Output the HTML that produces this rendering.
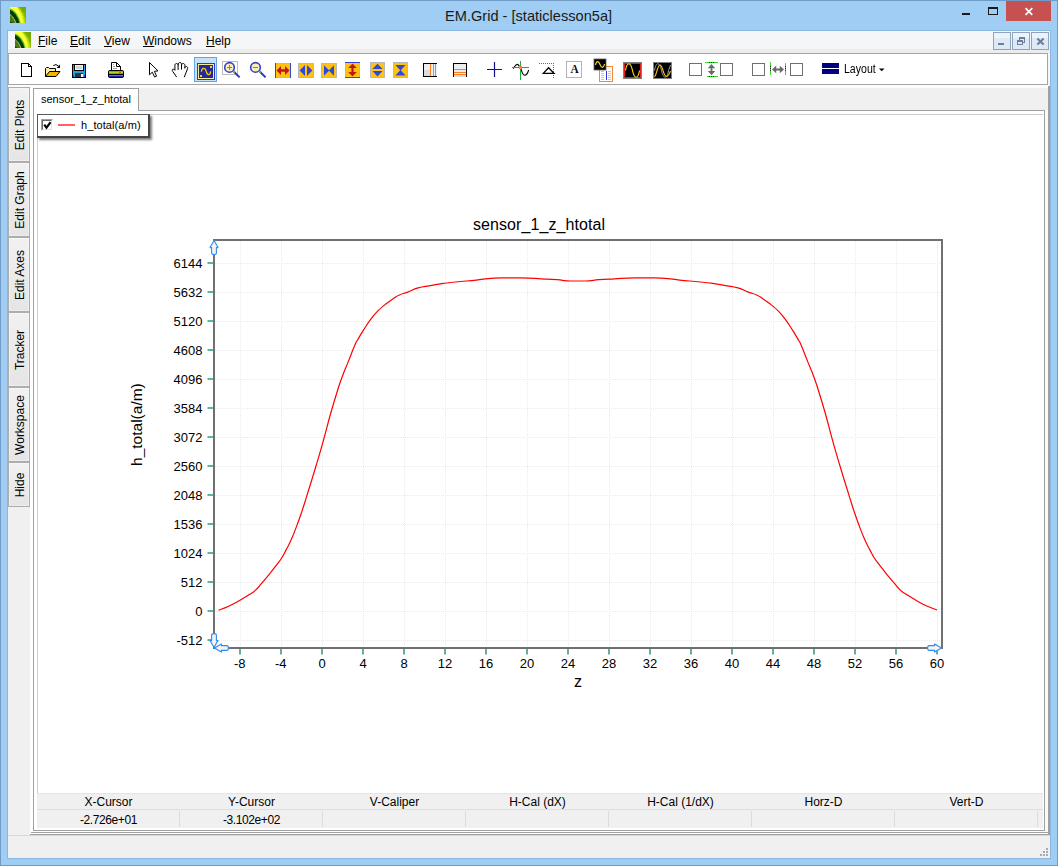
<!DOCTYPE html>
<html lang="en"><head><meta charset="utf-8"><title>EM.Grid - [staticlesson5a]</title>
<style>
html,body{margin:0;padding:0}
body{width:1058px;height:866px;position:relative;overflow:hidden;background:#9fcdf4;
 font-family:"Liberation Sans",sans-serif;color:#000}
.a{position:absolute}
.t{position:absolute;white-space:nowrap;line-height:1}
svg{position:absolute;overflow:visible}
.sb{position:absolute;left:8px;width:22px;box-sizing:border-box;background:linear-gradient(#f1f1f1,#e5e5e5);
 border:1px solid #adadad;box-shadow:inset 0 0 0 1px rgba(255,255,255,.35)}
.sb span{position:absolute;left:calc(50% + .8px);top:50%;white-space:nowrap;font-size:12px;line-height:1;
 transform:translate(-50%,-50%) rotate(-90deg)}
.cb{position:absolute;width:13px;height:13px;box-sizing:border-box;border:1px solid #707070;background:#fff;top:63px}
.hd{position:absolute;top:794px;height:16px;width:143px;text-align:center;font-size:12px;line-height:16px}
.vl{position:absolute;top:812px;height:17px;width:143px;text-align:center;font-size:12px;line-height:17px;letter-spacing:-.4px}
.sep{position:absolute;top:811px;height:16px;width:1px;background:#dcdcdc}
</style></head>
<body>
<div class="a" style="left:0;top:0;width:1058px;height:866px;box-sizing:border-box;border:1px solid #6f9bc6"></div>
<svg style="left:10px;top:7px;overflow:hidden" width="16" height="16" viewBox="0 0 16 16">
<defs><linearGradient id="lg1" x1="0" y1="1" x2="1" y2="0"><stop offset="0" stop-color="#a8d808"/><stop offset=".6" stop-color="#84bc00"/><stop offset="1" stop-color="#6ea400"/></linearGradient>
<filter id="lb1" x="-.2" y="-.2" width="1.4" height="1.4"><feGaussianBlur stdDeviation=".45"/></filter></defs>
<rect width="16" height="16" fill="url(#lg1)"/>
<g filter="url(#lb1)">
<path d="M7.500 -1 Q14.300 5 15.800 17 L-1 17 L-1 -1 Z" fill="#c8f010"/>
<path d="M7 -1 Q13.600 5 15.200 17" fill="none" stroke="#90a018" stroke-width=".7" stroke-dasharray="1.200 1"/>
<path d="M5.500 -1 Q11.800 5 13.600 17 L-1 17 L-1 -1 Z" fill="#ffff3a"/>
<path d="M-1 1 Q8 3.500 10.900 17 L-1 17 Z" fill="#4cc024"/>
<path d="M-1 2.600 Q7 5 9.600 17 L-1 17 Z" fill="#043a04"/>
<path d="M-1 6.800 Q4.500 9.500 6.700 17 L-1 17 Z" fill="#4a7a10"/>
</g>
<path d="M0 7.400 Q3.600 9.800 6 16.400" fill="none" stroke="#f4f4f4" stroke-width="1" stroke-dasharray="1.100 .9"/>
<path d="M0 14.300 L2.800 16 L0 16 Z" fill="#2c2240"/>
</svg>
<div class="t" id="ttl" style="left:445px;top:6.6px;font-size:14.6px;line-height:18px;color:#1a1a1a">EM.Grid - [staticlesson5a]</div>
<div class="a" style="left:962px;top:13px;width:8px;height:2px;background:#1a1a1a"></div>
<div class="a" style="left:988px;top:7px;width:10px;height:8px;box-sizing:border-box;border:1px solid #1a1a1a;border-top-width:2px"></div>
<div class="a" style="left:1006px;top:1px;width:45px;height:20px;background:#c75050"></div>
<svg style="left:1024px;top:7px" width="10" height="9" viewBox="0 0 10 9"><path d="M1.500 1.100 L8.300 7.900 M8.300 1.100 L1.500 7.900" stroke="#fff" stroke-width="1.700"/></svg>
<div class="a" style="left:7px;top:30px;width:1044px;height:829px;background:#8cb8e0"></div>
<div class="a" style="left:8px;top:31px;width:1042px;height:827px;background:#f0f0f0"></div>
<div class="a" style="left:8px;top:31px;width:1042px;height:18px;background:#f5f6f7"></div>
<div class="a" style="left:8px;top:49px;width:1042px;height:4px;background:#ececed"></div>
<svg style="left:15px;top:32px;overflow:hidden" width="16" height="16" viewBox="0 0 16 16">
<defs><linearGradient id="lg2" x1="0" y1="1" x2="1" y2="0"><stop offset="0" stop-color="#a8d808"/><stop offset=".6" stop-color="#84bc00"/><stop offset="1" stop-color="#6ea400"/></linearGradient>
<filter id="lb2" x="-.2" y="-.2" width="1.4" height="1.4"><feGaussianBlur stdDeviation=".45"/></filter></defs>
<rect width="16" height="16" fill="url(#lg2)"/>
<g filter="url(#lb2)">
<path d="M7.500 -1 Q14.300 5 15.800 17 L-1 17 L-1 -1 Z" fill="#c8f010"/>
<path d="M7 -1 Q13.600 5 15.200 17" fill="none" stroke="#90a018" stroke-width=".7" stroke-dasharray="1.200 1"/>
<path d="M5.500 -1 Q11.800 5 13.600 17 L-1 17 L-1 -1 Z" fill="#ffff3a"/>
<path d="M-1 1 Q8 3.500 10.900 17 L-1 17 Z" fill="#4cc024"/>
<path d="M-1 2.600 Q7 5 9.600 17 L-1 17 Z" fill="#043a04"/>
<path d="M-1 6.800 Q4.500 9.500 6.700 17 L-1 17 Z" fill="#4a7a10"/>
</g>
<path d="M0 7.400 Q3.600 9.800 6 16.400" fill="none" stroke="#f4f4f4" stroke-width="1" stroke-dasharray="1.100 .9"/>
<path d="M0 14.300 L2.800 16 L0 16 Z" fill="#2c2240"/>
</svg>
<div class="t" id="m_File" style="left:38px;top:34px;font-size:12px;line-height:14px"><u>F</u>ile</div>
<div class="t" id="m_Edit" style="left:70px;top:34px;font-size:12px;line-height:14px"><u>E</u>dit</div>
<div class="t" id="m_View" style="left:104px;top:34px;font-size:12px;line-height:14px"><u>V</u>iew</div>
<div class="t" id="m_Windows" style="left:143px;top:34px;font-size:12px;line-height:14px"><u>W</u>indows</div>
<div class="t" id="m_Help" style="left:206px;top:34px;font-size:12px;line-height:14px"><u>H</u>elp</div>
<div class="a" style="left:993px;top:32px;width:18px;height:18px;box-sizing:border-box;border:1px solid #8fa3ba;background:linear-gradient(#ecf3fb 0,#ecf3fb 30%,#dde9f7 30%,#dde9f7 100%)"></div>
<div class="a" style="left:1012px;top:32px;width:18px;height:18px;box-sizing:border-box;border:1px solid #8fa3ba;background:linear-gradient(#ecf3fb 0,#ecf3fb 30%,#dde9f7 30%,#dde9f7 100%)"></div>
<div class="a" style="left:1031px;top:32px;width:18px;height:18px;box-sizing:border-box;border:1px solid #8fa3ba;background:linear-gradient(#ecf3fb 0,#ecf3fb 30%,#dde9f7 30%,#dde9f7 100%)"></div>
<div class="a" style="left:998px;top:43px;width:6px;height:2px;background:#6d7e96"></div>
<svg style="left:1012px;top:32px" width="18" height="18" viewBox="0 0 18 18" shape-rendering="crispEdges"><path d="M7.5 8 V5.5 H12.5 V10.5 H11" fill="none" stroke="#6d7e96"/><rect x="7" y="5" width="6" height="2" fill="#6d7e96"/><rect x="5.5" y="8.5" width="5" height="4" fill="none" stroke="#6d7e96"/><rect x="5" y="8" width="6" height="2" fill="#6d7e96"/></svg>
<svg style="left:1031px;top:32px" width="18" height="18" viewBox="0 0 18 18"><path d="M6.400 6.400 L12.600 12.600 M12.600 6.400 L6.400 12.600" stroke="#6d7e96" stroke-width="2.100"/></svg>
<div class="a" style="left:8px;top:53px;width:1040px;height:32px;box-sizing:border-box;border:1px solid #a4a4a4;border-left-color:#b0b0b0;background:#fff"></div>
<div class="a" style="left:8px;top:85px;width:1040px;height:3px;background:#fcfcfc"></div>
<div class="a" style="left:1048px;top:86px;width:2px;height:749px;background:#a0a0a0"></div>
<div class="a" style="left:1048px;top:53px;width:2px;height:33px;background:#f6f6f6"></div>
<!-- toolbar icons: one page-coordinate SVG -->
<svg style="left:0;top:0" width="1058" height="866" viewBox="0 0 1058 866">
<!-- new -->
<path d="M21.5 63.5 H28.5 L31.5 66.5 V76.5 H21.5 Z" fill="#fff" stroke="#000" shape-rendering="crispEdges"/>
<path d="M28.5 63.5 V66.5 H31.5" fill="none" stroke="#000" shape-rendering="crispEdges"/>
<!-- open -->
<path d="M45.500 76.500 V68.500 L46.500 67.500 H48.500 L49.500 68.500 H55.500 V71.500" fill="#ffeea0" stroke="#000" stroke-width="1"/>
<path d="M45.500 76.500 L49.500 71.500 H60 L56 76.500 Z" fill="#f5b800" stroke="#000" stroke-width="1"/>
<path d="M53.300 65.600 Q56 63.200 58.600 66.200" fill="none" stroke="#000" stroke-width="1"/>
<path d="M60 64.600 V68 H56.600 Z" fill="#000"/>
<!-- save -->
<g shape-rendering="crispEdges">
<rect x="72.500" y="64.500" width="13" height="13" fill="#22a0ea" stroke="#000"/>
<rect x="74" y="65" width="10" height="6" fill="#000"/>
<rect x="75" y="65" width="8" height="5" fill="#f4f4f4"/>
<rect x="76" y="66" width="6" height="3" fill="#d2d2d2"/>
<rect x="75" y="73" width="8" height="4" fill="#343434"/>
<rect x="81" y="74" width="2" height="3" fill="#fff"/>
<rect x="73" y="75" width="1" height="2" fill="#4040d0"/>
<rect x="84" y="75" width="1" height="2" fill="#4040d0"/>
<rect x="84" y="65" width="1" height="1" fill="#9090a0"/>
</g>
<!-- print -->
<g>
<path d="M111.500 71 V62.500 H116.500 L120.500 66.500 V71" fill="#fff" stroke="#000" stroke-width="1"/>
<path d="M116.500 62.500 V66.500 H120.500" fill="none" stroke="#000" stroke-width="1"/>
<path d="M113 64.500 H114 M113 66.500 H115 M113 68.500 H117" stroke="#a0a0a0" stroke-width="1" shape-rendering="crispEdges"/>
<rect x="108.500" y="70.500" width="15" height="7" rx="1.200" fill="#000" stroke="#000"/>
<g shape-rendering="crispEdges">
<rect x="109" y="71" width="14" height="1" fill="#18c0d8"/>
<rect x="109" y="72" width="14" height="1" fill="#a8e018"/>
<rect x="119" y="72" width="2" height="1" fill="#f04828"/><rect x="121" y="72" width="1" height="1" fill="#f8c020"/>
<rect x="109" y="73" width="14" height="1" fill="#20b8b0"/>
<rect x="109" y="75" width="14" height="1" fill="#5078e8"/>
<rect x="109" y="76" width="14" height="1" fill="#1828b0"/>
</g>
</g>
<!-- pointer -->
<path d="M149.500 62.500 V74.800 L152.300 72.200 L154.600 77 L156.600 76.200 L154.400 71.300 L158 70.900 Z" fill="#fff" stroke="#000" stroke-width="1" stroke-linejoin="miter"/>
<!-- hand -->
<path d="M176.500 76.800 L172.800 71.600 C171.500 69.700 172.700 68.500 174.200 69.500 L174.900 70.300 V65.200 C174.900 63.100 177.800 62.900 178.100 64.800 V69.600 M178.100 64.800 C178.100 61.700 181.500 61.700 181.500 64.300 V69.200 M181.500 64.900 C181.700 62.900 184.700 62.900 184.900 65.200 V68.200 M184.900 67.300 C185.600 65.700 188.100 66.400 187.600 68.600 L184.400 76.800" fill="none" stroke="#000" stroke-width="1" stroke-linecap="round" stroke-linejoin="round"/>
<!-- selected: graph -->
<rect x="194.500" y="57.500" width="22" height="24" fill="#c4e0fd" stroke="#62a4ec"/>
<g shape-rendering="crispEdges">
<rect x="197" y="63" width="18" height="17" fill="#2c3cc4"/>
<rect x="198" y="64" width="16" height="15" fill="#f8e8a0"/>
<rect x="199" y="65" width="14" height="13" fill="#222a9a"/>
<rect x="210" y="66" width="2" height="2" fill="#ffd020"/>
<rect x="200" y="75" width="2" height="2" fill="#ffd020"/>
</g>
<path d="M201.400 71.800 C201.800 67.400 205.200 67.400 206.200 71.400 S210.300 76.200 210.600 71.400" fill="none" stroke="#ffc800" stroke-width="1.300"/>
<!-- zoom in -->
<rect x="222.500" y="61.500" width="15" height="13" fill="#fff" stroke="#bcbcbc" shape-rendering="crispEdges"/>
<path d="M233.200 71 L239.600 77.400" stroke="#2838c0" stroke-width="2"/>
<path d="M232.800 70.700 L234.600 72.500" stroke="#a0d820" stroke-width="1.400"/>
<circle cx="229.500" cy="67.400" r="4.800" fill="#fbeeb4" stroke="#3040d0" stroke-width="1.600"/>
<path d="M227 67.500 H232 M229.500 65 V70" stroke="#ff5a00" stroke-width="1" shape-rendering="crispEdges"/>
<!-- zoom out -->
<path d="M259.200 71 L265.600 77.400" stroke="#2838c0" stroke-width="2"/>
<path d="M258.800 70.700 L260.600 72.500" stroke="#a0d820" stroke-width="1.400"/>
<circle cx="255.500" cy="67.400" r="4.800" fill="#fbeeb4" stroke="#3040d0" stroke-width="1.600"/>
<path d="M253 67.500 H258" stroke="#ff5a00" stroke-width="1" shape-rendering="crispEdges"/>
<!-- yellow pan/zoom group -->
<g>
<rect x="275" y="63" width="16" height="15" fill="#ffc20e"/>
<path d="M275 63.500 H291 M275 77.500 H291" stroke="#b8b8b8"/>
<path d="M275.500 63 V78 M290.500 63 V78" stroke="#3048d8"/>
<path d="M276.500 70.500 L281 66.100 V69.300 H285 V66.100 L289.500 70.500 L285 74.900 V71.700 H281 V74.900 Z" fill="#c01818"/>

<rect x="298.500" y="63.500" width="15" height="14" fill="#ffc20e" stroke="#b8b8b8"/>
<path d="M299.600 70.500 L305 65 V76 Z M312.400 70.500 L307 65 V76 Z" fill="#3048d8"/>

<rect x="321.500" y="63.500" width="15" height="14" fill="#ffc20e" stroke="#b8b8b8"/>
<path d="M324 65.200 L329 70.200 L334 65.200 V75.800 L329 70.800 L324 75.800 Z" fill="#3048d8"/>

<rect x="345" y="62" width="15" height="16" fill="#ffc20e"/>
<path d="M345.500 62 V78 M359.500 62 V78" stroke="#b8b8b8"/>
<path d="M345 62.500 H360 M345 77.500 H360" stroke="#3048d8"/>
<path d="M352.500 63.400 L356.800 67.900 H353.600 V72.100 H356.800 L352.500 76.400 L348.200 72.100 H351.400 V67.900 H348.200 Z" fill="#c01818"/>

<rect x="370.500" y="62.500" width="14" height="15" fill="#ffc20e" stroke="#b8b8b8"/>
<path d="M377.500 63.700 L382.600 69 H372.400 Z M377.500 76.400 L382.600 71 H372.400 Z" fill="#3048d8"/>

<rect x="393.500" y="62.500" width="14" height="15" fill="#ffc20e" stroke="#b8b8b8"/>
<path d="M395.400 65 H405.600 L400.800 70.300 L405.600 75.500 H395.400 L400.200 70.300 Z" fill="#3048d8"/>
</g>
<!-- calipers -->
<g shape-rendering="crispEdges">
<rect x="424" y="64" width="13" height="6" fill="#eeeeee"/><rect x="424" y="70" width="13" height="6" fill="#dcdcdc"/>
<rect x="431" y="64" width="6" height="12" fill="#e8f0f8"/>
<path d="M437 63.500 H423.500 V76.500 H437" fill="none" stroke="#000" stroke-width="1"/>
<path d="M430.500 64 V76 M433.500 64 V76 M435.500 64 V76" stroke="#ff8020" stroke-width="1"/>
<rect x="454" y="64" width="12" height="5" fill="#eeeeee"/><rect x="454" y="69" width="12" height="6" fill="#e4ecf4"/><rect x="454" y="75" width="12" height="2" fill="#d4d8dc"/>
<path d="M453.500 77 V63.500 H466.500 V77" fill="none" stroke="#000" stroke-width="1"/>
<path d="M454 69.500 H466 M454 72.500 H466 M454 74.500 H466" stroke="#ff8020" stroke-width="1"/>
</g>
<!-- plus -->
<path d="M487 69.500 H502 M494.500 62 V77" stroke="#101090" stroke-width="1.200"/>
<!-- tracker -->
<path d="M513.200 68.600 L515 66 C516.200 64 517.800 64 518.700 65.400 L520.500 68 L521.600 70.800 C523.200 76.400 526.400 77.200 528.700 70" fill="none" stroke="#000" stroke-width="1.100"/>
<path d="M512 67.500 H529 M520.500 61 V80" stroke="#22a848" stroke-width="1" shape-rendering="crispEdges"/>
<rect x="519" y="66" width="3" height="3" fill="#ff8020" shape-rendering="crispEdges"/>
<!-- peak -->
<path d="M539 63.500 H554" stroke="#ff00ff" stroke-width="1" stroke-dasharray="1 1" shape-rendering="crispEdges"/>
<path d="M553.500 63 V78" stroke="#ff00ff" stroke-width="1" stroke-dasharray="1 1" shape-rendering="crispEdges"/>
<path d="M543.200 73.400 L548.600 67.800 L554 73.400 Z" fill="#fff" stroke="#000" stroke-width="1.300"/>
<!-- text A -->
<rect x="566.500" y="61.500" width="15" height="16" fill="#fff" stroke="#b4b4b4" shape-rendering="crispEdges"/>
<text transform="translate(574.500 73.300) scale(.84 1)" font-family="Liberation Serif, serif" font-weight="bold" font-size="13.500" text-anchor="middle" fill="#101010">A</text>
<!-- sine + doc -->
<rect x="599.500" y="66.500" width="13" height="15" fill="#fff" stroke="#f88830" stroke-width="1"/>
<path d="M601 71.500 H604 M601 73.500 H604 M601 75.500 H604 M601 77.500 H604 M601 79.500 H604 M608 71.500 H611 M608 73.500 H611 M608 75.500 H611 M608 77.500 H611 M608 79.500 H611" stroke="#c4c4c4" shape-rendering="crispEdges"/>
<path d="M606.500 71 V80" stroke="#3030e0" stroke-width="1" shape-rendering="crispEdges"/>
<rect x="594" y="59" width="12" height="11" fill="#000" stroke="#606060" stroke-width=".8"/>
<path d="M595.500 65 C596.500 60.500 598.500 60.500 600 64.500 S603.500 68.500 604.500 64" fill="none" stroke="#ffd820" stroke-width="1.150"/>
<!-- red scope -->
<rect x="623.500" y="62.500" width="18" height="16" fill="#000" stroke="#808080"/>
<rect x="624.500" y="63.500" width="16" height="14" fill="#000" stroke="#e02020"/>
<path d="M625.500 70.500 C627 61.500 630.500 61.500 632.500 70.500 S638 79.500 639.500 70.500" fill="none" stroke="#ffe020" stroke-width="1.150"/>
<!-- double scope -->
<rect x="653.500" y="62.500" width="18" height="16" fill="#000" stroke="#808080"/>
<path d="M654.500 70.500 C656 61.500 659.500 61.500 661.500 70.500 S667 79.500 668.500 70.500 L670.500 65" fill="none" stroke="#a0a0a0" stroke-width="1"/>
<path d="M654.500 77 C657 74 657.500 65 660 65 C663 65 663 76.500 666.500 76.500 C668.500 76.500 669.500 73 670.500 71" fill="none" stroke="#ffc820" stroke-width="1.150"/>
<!-- V caliper check group -->
<g shape-rendering="crispEdges">
<path d="M705 62.500 H718 M707 76.500 H718" stroke="#38dc28" stroke-width="1"/>
<path d="M709 62.500 H715 M709 76.500 H715" stroke="#103010" stroke-width="1" stroke-dasharray="1 1"/>
<path d="M770.500 62 V75 M785.500 63 V75" stroke="#38dc28" stroke-width="1"/>
<path d="M770.500 66 V72 M785.500 66 V72" stroke="#103010" stroke-width="1" stroke-dasharray="1 1"/>
</g>
<path d="M711.500 64 L715.200 68.200 H712.400 V71 H715.200 L711.500 75.200 L707.800 71 H710.600 V68.200 H707.800 Z" fill="#6a6a6a"/>
<!-- H caliper check group -->
<path d="M772 69.500 L776.200 65.800 V68.600 H779.800 V65.800 L784 69.500 L779.800 73.200 V70.400 H776.200 V73.200 Z" fill="#6a6a6a"/>
<!-- layout -->
<rect x="822" y="63" width="17" height="11" fill="#000080" shape-rendering="crispEdges"/>
<rect x="822" y="68" width="17" height="1" fill="#fff" shape-rendering="crispEdges"/>
<path d="M879 68.500 H884.500 L881.750 71.300 Z" fill="#000"/>
</svg>
<div class="cb" style="left:689px"></div><div class="cb" style="left:720px"></div><div class="cb" style="left:752px"></div><div class="cb" style="left:790px"></div>
<div class="t" style="left:843.5px;top:62px;font-size:12px;line-height:14px;transform:scaleX(.88);transform-origin:0 0">Layout</div>

<div class="sb" style="top:87px;height:75px"><span>Edit Plots</span></div>
<div class="sb" style="top:162px;height:75px"><span>Edit Graph</span></div>
<div class="sb" style="top:237px;height:75px"><span>Edit Axes</span></div>
<div class="sb" style="top:312px;height:75px"><span>Tracker</span></div>
<div class="sb" style="top:387px;height:75px"><span>Workspace</span></div>
<div class="sb" style="top:462px;height:45px"><span>Hide</span></div>
<div class="a" style="left:30px;top:88px;width:3px;height:746px;background:#fff"></div>
<div class="a" style="left:1045px;top:110px;width:3px;height:724px;background:#fafafa"></div>
<div class="a" style="left:30px;top:831px;width:1018px;height:3px;background:#fff"></div>
<div class="a" style="left:33px;top:110px;width:1012px;height:721px;box-sizing:border-box;border:1px solid #a0a0a0;background:#fff"></div>
<div class="a" style="left:31px;top:832px;width:1017px;height:1px;background:#a0a0a0"></div>
<div class="a" style="left:30px;top:834px;width:1020px;height:1px;background:#a0a0a0"></div>
<div class="a" style="left:33px;top:88px;width:106px;height:23px;box-sizing:border-box;border:1px solid #a0a0a0;border-bottom:none;background:#fff"></div>
<div class="t" style="left:41px;top:93px;font-size:11px;line-height:12px">sensor_1_z_htotal</div>
<div class="a" style="left:37px;top:114px;width:1006px;height:1px;background:#cfcfcf"></div>
<div class="a" style="left:37px;top:114px;width:1px;height:680px;background:#cfcfcf"></div>
<div class="a" style="left:37px;top:114px;width:113px;height:24px;box-sizing:border-box;border:1px solid #5a5a5a;border-right:2px solid #444;border-bottom:2px solid #444;background:#fff;box-shadow:2px 2px 2px rgba(0,0,0,.5)"></div>
<div class="a" style="left:41px;top:119px;width:12px;height:12px;box-sizing:border-box;border:1px solid #fff;border-top-color:#a0a0a0;border-left-color:#a0a0a0;background:#fff"></div>
<div class="a" style="left:42px;top:120px;width:10px;height:10px;box-sizing:border-box;border:1px solid #e3e3e3;border-top-color:#696969;border-left-color:#696969;background:#fff"></div>
<svg style="left:41px;top:119px" width="12" height="12" viewBox="0 0 12 12"><path d="M3.200 5.600 L5.500 8.700 L9.600 3.200" fill="none" stroke="#000" stroke-width="2.100"/></svg>
<div class="a" style="left:58px;top:124px;width:17px;height:2px;background:#ff6262"></div>
<div class="t" style="left:81px;top:119px;font-size:11px;line-height:12px;letter-spacing:.08px">h_total(a/m)</div>
<div class="a" style="left:37px;top:793px;width:1006px;height:35px;background:#f0f0f0"></div>
<div class="a" style="left:37px;top:809px;width:1006px;height:1px;background:#dedede"></div>
<div class="a" style="left:37px;top:793px;width:1006px;height:1px;background:#e4e4e4"></div>
<div class="hd" style="left:37px">X-Cursor</div>
<div class="vl" style="left:37px">-2.726e+01</div>
<div class="sep" style="left:179px"></div>
<div class="hd" style="left:180px">Y-Cursor</div>
<div class="vl" style="left:180px">-3.102e+02</div>
<div class="sep" style="left:322px"></div>
<div class="hd" style="left:323px">V-Caliper</div>
<div class="sep" style="left:465px"></div>
<div class="hd" style="left:466px">H-Cal (dX)</div>
<div class="sep" style="left:608px"></div>
<div class="hd" style="left:609px">H-Cal (1/dX)</div>
<div class="sep" style="left:751px"></div>
<div class="hd" style="left:752px">Horz-D</div>
<div class="sep" style="left:894px"></div>
<div class="hd" style="left:895px">Vert-D</div>
<div class="sep" style="left:1037px"></div>
<div class="a" style="left:8px;top:835px;width:1042px;height:1px;background:#d8d8d8"></div>
<svg style="left:0;top:0" width="1058" height="866" viewBox="0 0 1058 866" shape-rendering="crispEdges"><g fill="#aaaaaa"><rect x="1046" y="848" width="2" height="2"/><rect x="1046" y="851" width="2" height="2"/><rect x="1043" y="851" width="2" height="2"/><rect x="1046" y="854" width="2" height="2"/><rect x="1043" y="854" width="2" height="2"/><rect x="1040" y="854" width="2" height="2"/></g></svg>
<svg style="left:0;top:0" width="1058" height="866" viewBox="0 0 1058 866" font-family="Liberation Sans, sans-serif">
<path d="M240.5 241V647M281.5 241V647M322.5 241V647M363.5 241V647M404.5 241V647M445.5 241V647M486.5 241V647M527.5 241V647M568.5 241V647M609.5 241V647M650.5 241V647M691.5 241V647M732.5 241V647M773.5 241V647M814.5 241V647M855.5 241V647M896.5 241V647M937.5 241V647M215 263.5H941M215 292.5H941M215 321.5H941M215 350.5H941M215 379.5H941M215 408.5H941M215 437.5H941M215 466.5H941M215 495.5H941M215 524.5H941M215 553.5H941M215 582.5H941M215 611.5H941M215 640.5H941" stroke="#ebebeb" stroke-width="1" stroke-dasharray="1 1" fill="none" shape-rendering="crispEdges"/>
<path d="M240 649V654.5M281 649V654.5M322 649V654.5M363 649V654.5M404 649V654.5M445 649V654.5M486 649V654.5M527 649V654.5M568 649V654.5M609 649V654.5M650 649V654.5M691 649V654.5M732 649V654.5M773 649V654.5M814 649V654.5M855 649V654.5M896 649V654.5M937 649V654.5M207.5 263H213M207.5 292H213M207.5 321H213M207.5 350H213M207.5 379H213M207.5 408H213M207.5 437H213M207.5 466H213M207.5 495H213M207.5 524H213M207.5 553H213M207.5 582H213M207.5 611H213M207.5 640H213" stroke="#62b0a8" stroke-width="2" fill="none"/>
<rect x="214" y="240" width="728" height="408" fill="none" stroke="#707070" stroke-width="2"/>
<text x="202.5" y="267.7" font-size="13" text-anchor="end">6144</text>
<text x="202.5" y="296.7" font-size="13" text-anchor="end">5632</text>
<text x="202.5" y="325.7" font-size="13" text-anchor="end">5120</text>
<text x="202.5" y="354.7" font-size="13" text-anchor="end">4608</text>
<text x="202.5" y="383.7" font-size="13" text-anchor="end">4096</text>
<text x="202.5" y="412.7" font-size="13" text-anchor="end">3584</text>
<text x="202.5" y="441.7" font-size="13" text-anchor="end">3072</text>
<text x="202.5" y="470.7" font-size="13" text-anchor="end">2560</text>
<text x="202.5" y="499.7" font-size="13" text-anchor="end">2048</text>
<text x="202.5" y="528.7" font-size="13" text-anchor="end">1536</text>
<text x="202.5" y="557.7" font-size="13" text-anchor="end">1024</text>
<text x="202.5" y="586.7" font-size="13" text-anchor="end">512</text>
<text x="202.5" y="615.7" font-size="13" text-anchor="end">0</text>
<text x="202.5" y="644.7" font-size="13" text-anchor="end">-512</text>
<text x="239.7" y="667.5" font-size="13" text-anchor="middle">-8</text>
<text x="280.7" y="667.5" font-size="13" text-anchor="middle">-4</text>
<text x="322.0" y="667.5" font-size="13" text-anchor="middle">0</text>
<text x="363.0" y="667.5" font-size="13" text-anchor="middle">4</text>
<text x="404.0" y="667.5" font-size="13" text-anchor="middle">8</text>
<text x="445.0" y="667.5" font-size="13" text-anchor="middle">12</text>
<text x="486.0" y="667.5" font-size="13" text-anchor="middle">16</text>
<text x="527.0" y="667.5" font-size="13" text-anchor="middle">20</text>
<text x="568.0" y="667.5" font-size="13" text-anchor="middle">24</text>
<text x="609.0" y="667.5" font-size="13" text-anchor="middle">28</text>
<text x="650.0" y="667.5" font-size="13" text-anchor="middle">32</text>
<text x="691.0" y="667.5" font-size="13" text-anchor="middle">36</text>
<text x="732.0" y="667.5" font-size="13" text-anchor="middle">40</text>
<text x="773.0" y="667.5" font-size="13" text-anchor="middle">44</text>
<text x="814.0" y="667.5" font-size="13" text-anchor="middle">48</text>
<text x="855.0" y="667.5" font-size="13" text-anchor="middle">52</text>
<text x="896.0" y="667.5" font-size="13" text-anchor="middle">56</text>
<text x="937.0" y="667.5" font-size="13" text-anchor="middle">60</text>
<text x="539" y="229.7" font-size="16" text-anchor="middle" textLength="132" lengthAdjust="spacing">sensor_1_z_htotal</text>
<text x="578" y="687" font-size="16" text-anchor="middle">z</text>
<text transform="translate(142 424.6) rotate(-90)" font-size="15.5" text-anchor="middle">h_total(a/m)</text>
<path d="M218.5 610.3 C221.4 609.2 223.6 608.6 229.2 606.0 C234.8 603.4 234.1 603.6 239.6 600.5 C245.1 597.4 245.7 597.0 250.0 594.2 C254.3 591.4 252.5 593.1 255.6 590.1 C258.7 587.1 258.1 587.4 261.8 583.1 C265.5 578.8 265.5 578.9 269.4 574.1 C273.3 569.3 273.2 569.3 276.4 565.1 C279.6 560.9 278.9 562.3 281.5 558.2 C284.1 554.1 283.4 555.1 286.1 549.9 C288.8 544.7 288.7 545.5 291.6 538.8 C294.5 532.1 294.3 532.3 297.1 524.9 C299.9 517.5 299.4 518.9 302.0 511.1 C304.6 503.3 303.2 507.6 306.9 495.6 C310.6 483.6 311.6 480.8 316.0 466.0 C320.4 451.2 319.6 454.2 323.5 440.1 C327.4 426.0 327.2 425.7 330.8 413.0 C334.4 400.3 334.0 402.0 337.0 392.3 C340.0 382.6 339.1 385.0 342.2 376.7 C345.3 368.4 345.2 369.4 348.5 361.1 C351.8 352.8 352.3 351.0 354.7 345.5 C357.1 340.0 355.0 344.5 357.4 340.3 C359.8 336.1 360.2 335.3 363.6 329.9 C367.0 324.5 366.6 324.9 370.3 319.9 C374.0 314.9 373.7 315.2 377.6 311.2 C381.5 307.2 380.6 308.2 384.8 304.9 C389.0 301.6 389.3 301.3 393.2 298.7 C397.1 296.1 395.5 296.8 399.4 295.0 C403.3 293.2 402.7 294.0 407.7 292.1 C412.7 290.2 412.2 289.6 418.1 287.9 C424.0 286.2 424.1 286.7 430.0 285.6 C435.9 284.5 433.6 284.9 440.4 283.9 C447.2 282.9 445.9 283.0 455.5 282.0 C465.1 281.0 468.2 281.0 476.3 280.1 C484.4 279.2 478.9 279.4 485.7 278.8 C492.5 278.2 492.5 278.1 501.8 277.9 C511.1 277.7 510.1 277.7 520.7 277.9 C531.3 278.1 531.8 278.3 541.5 278.8 C551.2 279.3 550.2 279.2 557.0 279.7 C563.8 280.2 561.4 280.5 567.0 280.8 C572.6 281.1 572.1 281.0 578.0 281.0 C583.9 281.0 583.4 281.1 589.0 280.8 C594.6 280.5 592.2 280.2 599.0 279.7 C605.8 279.2 604.8 279.3 614.5 278.8 C624.2 278.3 624.7 278.1 635.3 277.9 C645.9 277.7 644.9 277.7 654.2 277.9 C663.5 278.1 663.5 278.2 670.3 278.8 C677.1 279.4 671.6 279.2 679.7 280.1 C687.8 281.0 690.9 281.0 700.5 282.0 C710.1 283.0 708.8 282.9 715.6 283.9 C722.4 284.9 720.1 284.5 726.0 285.6 C731.9 286.7 732.0 286.2 737.9 287.9 C743.8 289.6 743.3 290.2 748.3 292.1 C753.3 294.0 752.7 293.2 756.6 295.0 C760.5 296.8 758.9 296.1 762.8 298.7 C766.7 301.3 767.0 301.6 771.2 304.9 C775.4 308.2 774.5 307.2 778.4 311.2 C782.3 315.2 782.0 314.9 785.7 319.9 C789.4 324.9 789.0 324.5 792.4 329.9 C795.8 335.3 796.2 336.1 798.6 340.3 C801.0 344.5 798.9 340.0 801.3 345.5 C803.7 351.0 804.2 352.8 807.5 361.1 C810.8 369.4 810.7 368.4 813.8 376.7 C816.9 385.0 816.0 382.6 819.0 392.3 C822.0 402.0 821.6 400.3 825.2 413.0 C828.8 425.7 828.6 426.0 832.5 440.1 C836.4 454.2 835.6 451.2 840.0 466.0 C844.4 480.8 845.4 483.6 849.1 495.6 C852.8 507.6 851.4 503.3 854.0 511.1 C856.6 518.9 856.1 517.5 858.9 524.9 C861.7 532.3 861.5 532.1 864.4 538.8 C867.3 545.5 867.2 544.7 869.9 549.9 C872.6 555.1 871.9 554.1 874.5 558.2 C877.1 562.3 876.4 560.9 879.6 565.1 C882.8 569.3 882.7 569.3 886.6 574.1 C890.5 578.9 890.5 578.8 894.2 583.1 C897.9 587.4 897.3 587.1 900.4 590.1 C903.5 593.1 901.7 591.4 906.0 594.2 C910.3 597.0 910.9 597.4 916.4 600.5 C921.9 603.6 921.3 603.5 926.8 606.0 C932.3 608.5 934.3 608.9 937.0 610.0" fill="none" stroke="#ff0000" stroke-width="1.2" stroke-linejoin="round"/>
<path d="M214 240.6 L218 247.6 L216.4 247.6 L216.4 253 Q216.4 254.6 214 254.6 Q211.6 254.6 211.6 253 L211.6 247.6 L210 247.6 Z" fill="#f6f2ee" stroke="#2b8cf5" stroke-width="1.1" stroke-linejoin="round"/>
<path d="M214 647.6 L218 640.6 L216.4 640.6 L216.4 635.2 Q216.4 633.6 214 633.6 Q211.6 633.6 211.6 635.2 L211.6 640.6 L210 640.6 Z" fill="#f6f2ee" stroke="#2b8cf5" stroke-width="1.1" stroke-linejoin="round"/>
<path d="M214.4 648 L221.4 644 L221.4 645.6 L226.8 645.6 Q228.4 645.6 228.4 648 Q228.4 650.4 226.8 650.4 L221.4 650.4 L221.4 652 Z" fill="#f6f2ee" stroke="#2b8cf5" stroke-width="1.1" stroke-linejoin="round"/>
<path d="M941.6 648 L934.6 644 L934.6 645.6 L929.2 645.6 Q927.6 645.6 927.6 648 Q927.6 650.4 929.2 650.4 L934.6 650.4 L934.6 652 Z" fill="#f6f2ee" stroke="#2b8cf5" stroke-width="1.1" stroke-linejoin="round"/>
</svg>
</body></html>
